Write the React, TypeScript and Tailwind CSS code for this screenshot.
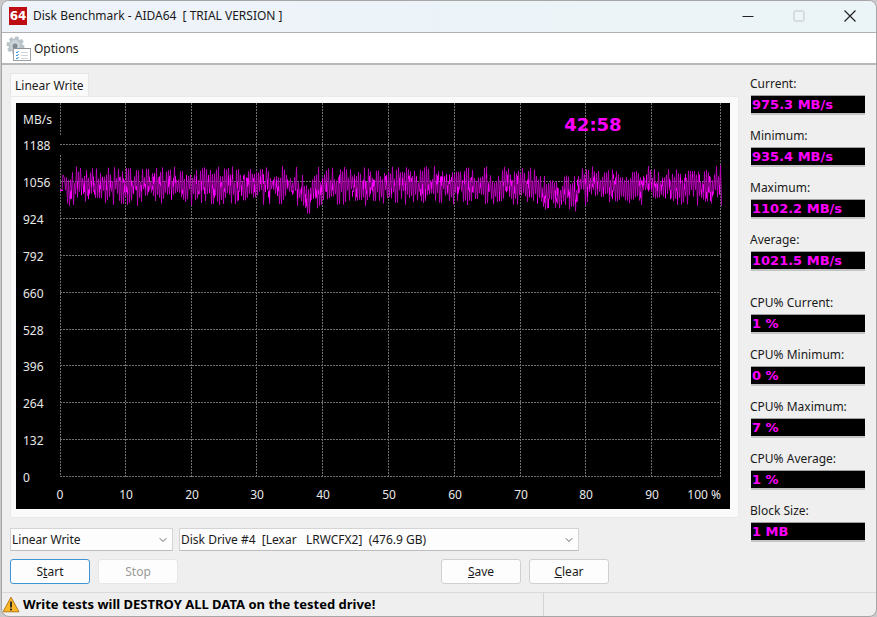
import { ChevronDown } from "lucide-react";

const speedStats = [
  { id: "current", label: "Current:", value: "975.3 MB/s" },
  { id: "minimum", label: "Minimum:", value: "935.4 MB/s" },
  { id: "maximum", label: "Maximum:", value: "1102.2 MB/s" },
  { id: "average", label: "Average:", value: "1021.5 MB/s" },
];

const cpuStats = [
  { id: "cpu-current", label: "CPU% Current:", value: "1 %" },
  { id: "cpu-minimum", label: "CPU% Minimum:", value: "0 %" },
  { id: "cpu-maximum", label: "CPU% Maximum:", value: "7 %" },
  { id: "cpu-average", label: "CPU% Average:", value: "1 %" },
  { id: "block-size", label: "Block Size:", value: "1 MB" },
];

const speeds = [1188, 1056, 924, 792, 660, 528, 396, 264, 132, 0];
const percents = [0, 10, 20, 30, 40, 50, 60, 70, 80, 90];

const PLOT_LEFT = 44;
const PLOT_RIGHT = 705;
const rowY = (i: number) => 41 + Math.round(i * 36.9);
const colX = (i: number) => 44 + Math.round(i * 65.8);

// Small seeded generator so the trace is the same on every render
function buildTrace() {
  let seed = 64;
  const rand = () => {
    seed = (seed * 16807) % 2147483647;
    return seed / 2147483647;
  };
  const sweep = ["44,87", "46,87", "47,72"];
  let accents = "M44 87.5h3";
  let up = true;
  for (let x = 48; x < PLOT_RIGHT; x += 1) {
    const dip = (x > 281 && x < 302) || (x > 519 && x < 561);
    const base = dip ? 91 : 83;
    const spike = rand() > 0.7;
    const reach = spike ? 14 + rand() * 6 : 3 + rand() * 12;
    sweep.push(`${x + 0.5},${(up ? base - reach : base + reach).toFixed(1)}`);
    if (rand() > 0.65) {
      const top = base - 12 + rand() * 18;
      accents += `M${x + 0.5} ${top.toFixed(1)}v${(3 + rand() * 7).toFixed(1)}`;
    }
    up = !up;
  }
  sweep.push("704.5,62", "705.5,103");
  return { sweep: sweep.join(" "), accents };
}

const trace = buildTrace();

function AppIcon() {
  return (
    <svg width="18" height="18" viewBox="0 0 18 18" aria-hidden="true">
      <rect width="18" height="18" fill="#bd0d12" />
      <text
        x="9"
        y="13"
        textAnchor="middle"
        fill="#fff"
        className="font-['DejaVu_Sans'] text-[12px] font-bold"
      >
        64
      </text>
    </svg>
  );
}

function OptionsIcon() {
  return (
    <svg width="26" height="26" viewBox="0 0 26 26" aria-hidden="true">
      <g fill="#b9c3ca">
        <circle cx="9.5" cy="9.5" r="7" />
        {[0, 45, 90, 135].map((angle) => (
          <rect
            key={angle}
            x="7.5"
            y="0.5"
            width="4"
            height="18"
            rx="1"
            transform={`rotate(${angle + 10} 9.5 9.5)`}
          />
        ))}
      </g>
      <circle cx="9" cy="9" r="5" fill="#cdd5da" />
      <circle cx="9" cy="10" r="2.5" fill="#7f8a93" />
      <rect x="7.5" y="12.5" width="17" height="12" fill="#fff" stroke="#9a9fa3" />
      <path d="M7 12.5h18" stroke="#8b9196" />
      <path
        d="M10 16l1 1 1.5-2M10 19l1 1 1.5-2M10 22l1 1 1.5-2"
        fill="none"
        stroke="#2f8fe0"
      />
      <path d="M15 16.5h7M15 19.5h7M15 22.5h7" stroke="#d4d4d4" />
    </svg>
  );
}

function WarningIcon() {
  return (
    <svg width="18" height="17" viewBox="0 0 18 17" aria-hidden="true">
      <path
        d="M9 1.2 17 15.8H1Z"
        fill="#fcb827"
        stroke="#b57a1c"
        strokeLinejoin="round"
      />
      <path d="M9 5.5v6" stroke="#222" strokeWidth="1.8" />
      <circle cx="9" cy="13.5" r="1.1" fill="#222" />
    </svg>
  );
}

function TitleBar() {
  return (
    <header className="flex h-8 items-center justify-between border-b border-[#b0b0b0] bg-linear-to-r from-[#eef3fa] to-[#ebf4f7] pb-px pl-[7px]">
      <div className="flex items-center gap-[6px]">
        <AppIcon />
        <h1 className="whitespace-pre">Disk Benchmark - AIDA64  [ TRIAL VERSION ]</h1>
      </div>
      <div className="flex items-center gap-[39px] pr-5 text-[#222]">
        <button type="button" aria-label="Minimize">
          <svg width="12" height="12" viewBox="0 0 12 12">
            <path d="M0.5 6.5h11" stroke="currentColor" />
          </svg>
        </button>
        <button type="button" aria-label="Maximize" disabled>
          <svg width="12" height="12" viewBox="0 0 12 12">
            <rect x="1" y="1" width="10" height="10" rx="1" fill="none" stroke="#c2c8cb" />
          </svg>
        </button>
        <button type="button" aria-label="Close">
          <svg width="12" height="12" viewBox="0 0 12 12">
            <path d="M0.5 0.5l11 11M11.5 0.5l-11 11" stroke="currentColor" strokeWidth="1.2" />
          </svg>
        </button>
      </div>
    </header>
  );
}

function Chart() {
  return (
    <svg
      viewBox="0 0 714 406"
      className="block w-full bg-black"
      role="img"
      aria-label="Linear write speed"
    >
      <g stroke="#707070" strokeDasharray="2 1">
        {speeds.map((speed, i) => (
          <path key={speed} d={`M${PLOT_LEFT} ${rowY(i) + 0.5}H${PLOT_RIGHT}`} />
        ))}
        <path d="M44.5 0V33M44.5 52V374" />
        {percents.slice(1).map((percent, i) => (
          <path key={percent} d={`M${colX(i + 1) - 0.5} 0V374`} />
        ))}
        <path d="M704.5 0V374" />
      </g>
      <polyline points={trace.sweep} fill="none" stroke="#c000c0" strokeWidth="0.9" />
      <path d={trace.accents} stroke="#f0f" />
      <g fill="#e8e8e8" fontSize="12">
        <text x="7" y="21">MB/s</text>
        {speeds.map((speed, i) => (
          <text key={speed} x="7" y={rowY(i) + 6}>
            {speed}
          </text>
        ))}
        {percents.map((percent, i) => (
          <text key={percent} x={colX(i)} y="396" textAnchor="middle">
            {percent}
          </text>
        ))}
        <text x="705" y="396" textAnchor="end">100 %</text>
      </g>
      <text
        x="577"
        y="28"
        textAnchor="middle"
        fill="#f0f"
        className="font-['DejaVu_Sans'] text-[18px] font-bold"
      >
        42:58
      </text>
    </svg>
  );
}

function Stat({ id, label, value }: { id: string; label: string; value: string }) {
  return (
    <div>
      <label htmlFor={id} className="block h-5 leading-[18px]">
        {label}
      </label>
      <output
        id={id}
        className="ml-px block h-5 border-t border-b-2 border-t-[#a0a0a0] border-b-[#c4c4c4] bg-black pl-px font-['DejaVu_Sans'] text-[13px] leading-[17px] font-bold text-[#f0f]"
      >
        {value}
      </output>
    </div>
  );
}

function Dropdown({ label, options, className }: { label: string; options: string[]; className: string }) {
  return (
    <div className={`relative ${className}`}>
      <select
        aria-label={label}
        className="h-[23px] w-full appearance-none border border-[#d4d4d4] border-b-[#bdbdbd] bg-[#fdfdfd] pl-px whitespace-pre"
      >
        {options.map((option) => (
          <option key={option}>{option}</option>
        ))}
      </select>
      <ChevronDown
        size={12}
        strokeWidth={2}
        className="pointer-events-none absolute top-[6px] right-1 text-[#666]"
      />
    </div>
  );
}

const buttonStyle = "h-[25px] w-20 rounded-[3px] border bg-[#fdfdfd]";

export default function App() {
  return (
    <div className="min-h-screen bg-[#c9c9c9] pl-px font-['Noto_Sans',sans-serif] text-[12px] text-[#1a1a1a]">
      <div className="flex min-h-screen flex-col overflow-hidden rounded-lg border border-[#a6a6a6] bg-[#efefef]">
        <TitleBar />
        <nav className="h-8 border-b-2 border-[#b8b8b8] bg-white pl-1">
          <button type="button" className="flex h-full items-center gap-[2px] pt-px">
            <OptionsIcon />
            Options
          </button>
        </nav>

        <main className="flex flex-1 gap-[11px] pt-2 pr-[10px] pl-2">
          <div className="min-w-0 flex-1">
            <div className="flex">
              <span className="h-[23px] border border-b-0 border-[#e6e6e6] bg-[#fafafa] px-1 leading-6">
                Linear Write
              </span>
            </div>
            <div className="border border-[#eaeaea] bg-[#fafafa] pt-[6px] pr-2 pb-2 pl-[5px]">
              <Chart />
            </div>

            <div className="mt-[10px] flex gap-[6px] pr-[160px]">
              <Dropdown label="Test" options={["Linear Write"]} className="w-[163px]" />
              <Dropdown
                label="Drive"
                options={["Disk Drive #4\u00a0 [Lexar\u00a0\u00a0 LRWCFX2]\u00a0 (476.9 GB)"]}
                className="flex-1"
              />
            </div>
            <div className="mt-2 flex justify-between pr-[130px]">
              <div className="flex gap-2">
                <button type="button" className={`${buttonStyle} border-[#3d94d6]`}>
                  S<u>t</u>art
                </button>
                <button
                  type="button"
                  disabled
                  className={`${buttonStyle} border-[#e6e6e6] text-[#9a9a9a]`}
                >
                  Stop
                </button>
              </div>
              <div className="flex gap-2">
                <button type="button" className={`${buttonStyle} border-[#d0d0d0]`}>
                  <u>S</u>ave
                </button>
                <button type="button" className={`${buttonStyle} border-[#d0d0d0]`}>
                  <u>C</u>lear
                </button>
              </div>
            </div>
          </div>

          <aside className="flex w-[116px] flex-col gap-[23px] pt-[2px] pr-px">
            <div className="flex flex-col gap-3">
              {speedStats.map((stat) => (
                <Stat key={stat.id} {...stat} />
              ))}
            </div>
            <div className="flex flex-col gap-3">
              {cpuStats.map((stat) => (
                <Stat key={stat.id} {...stat} />
              ))}
            </div>
          </aside>
        </main>

        <footer className="flex h-6 border-t border-[#dadada] text-[13px] font-bold text-black">
          <div className="flex w-[542px] items-center gap-[3px] border-r border-[#d4d4d4]">
            <WarningIcon />
            Write tests will DESTROY ALL DATA on the tested drive!
          </div>
        </footer>
      </div>
    </div>
  );
}
